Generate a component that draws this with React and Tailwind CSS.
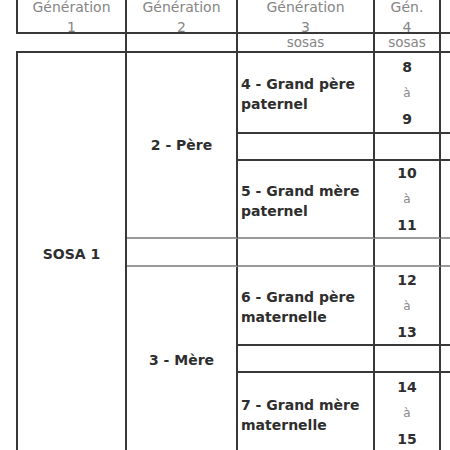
import React from 'react';

const V = 'border-[#383838]';

const Number = ({ from, to }) => (
  <div className="flex flex-col items-center justify-center h-full">
    <div className="leading-[26px] font-bold text-[14px] text-[#2e2e2e]">{from}</div>
    <div className="leading-[26px] text-[12px] text-[#8a8a8a]">à</div>
    <div className="leading-[26px] font-bold text-[14px] text-[#2e2e2e]">{to}</div>
  </div>
);

const Name = ({ children }) => (
  <div className="flex items-center h-full pl-[3px] pt-[3px] font-bold text-[14px] leading-[20px] text-[#2e2e2e]">
    {children}
  </div>
);

const Head = ({ top, bottom }) => (
  <>
    <div className="leading-[14px]">{top}</div>
    <div className="leading-[12px] mt-[7px]">{bottom}</div>
  </>
);

const App = () => {
  return (
    <div
      className="w-[450px] h-[450px] overflow-hidden bg-white"
      style={{ fontFamily: '"DejaVu Sans", Verdana, sans-serif' }}
    >
      <div className="grid grid-cols-[16px_111px_111px_137px_66px_9px] grid-rows-[34px_19px_81px_27px_78px_28px_79px_27px_80px]">
        {/* Header */}
        <div className="row-start-1 col-start-1"></div>
        <div className={`row-start-1 col-start-2 border-l-2 border-r-2 border-b-2 ${V} text-center text-[14px] text-[#858585]`}>
          <Head top="Génération" bottom="1" />
        </div>
        <div className={`row-start-1 col-start-3 border-r-2 border-b-2 ${V} text-center text-[14px] text-[#858585]`}>
          <Head top="Génération" bottom="2" />
        </div>
        <div className={`row-start-1 col-start-4 border-r-2 border-b-2 ${V} text-center text-[14px] text-[#858585]`}>
          <Head top="Génération" bottom="3" />
        </div>
        <div className={`row-start-1 col-start-5 border-r-2 border-b-2 ${V} text-center text-[14px] text-[#858585]`}>
          <Head top="Gén." bottom="4" />
        </div>
        <div className={`row-start-1 col-start-6 border-b-2 ${V}`}></div>

        {/* sosas row */}
        <div className={`row-start-2 col-start-2 border-r-2 border-b-2 ${V}`}></div>
        <div className={`row-start-2 col-start-3 border-r-2 border-b-2 ${V}`}></div>
        <div className={`row-start-2 col-start-4 border-r-2 border-b-2 ${V} text-center text-[13.5px] leading-[17px] text-[#858585]`}>sosas</div>
        <div className={`row-start-2 col-start-5 border-r-2 border-b-2 ${V} text-center text-[13.5px] leading-[17px] text-[#858585]`}>sosas</div>
        <div className={`row-start-2 col-start-6 border-b-2 ${V}`}></div>

        {/* Generation 1 */}
        <div className={`row-start-3 row-span-7 col-start-2 border-l-2 border-r-2 ${V} flex items-center justify-center pt-[2px] font-bold text-[14px] text-[#2e2e2e]`}>
          SOSA 1
        </div>

        {/* Generation 2 */}
        <div className={`row-start-3 row-span-3 col-start-3 border-r-2 ${V} border-b-2 border-b-[#9a9a9a] flex items-center justify-center font-bold text-[14px] text-[#2e2e2e]`}>
          2 - Père
        </div>
        <div className={`row-start-6 col-start-3 border-r-2 ${V} border-b-2 border-b-[#9a9a9a]`}></div>
        <div className={`row-start-7 row-span-3 col-start-3 border-r-2 ${V} flex items-center justify-center font-bold text-[14px] text-[#2e2e2e]`}>
          3 - Mère
        </div>

        {/* Generation 3 */}
        <div className={`row-start-3 col-start-4 border-r-2 border-b-2 ${V}`}><Name>4 - Grand père<br />paternel</Name></div>
        <div className={`row-start-4 col-start-4 border-r-2 border-b-2 ${V}`}></div>
        <div className={`row-start-5 col-start-4 border-r-2 ${V} border-b-2 border-b-[#9a9a9a]`}><Name>5 - Grand mère<br />paternel</Name></div>
        <div className={`row-start-6 col-start-4 border-r-2 ${V} border-b-2 border-b-[#9a9a9a]`}></div>
        <div className={`row-start-7 col-start-4 border-r-2 border-b-2 ${V}`}><Name>6 - Grand père<br />maternelle</Name></div>
        <div className={`row-start-8 col-start-4 border-r-2 border-b-2 ${V}`}></div>
        <div className={`row-start-9 col-start-4 border-r-2 ${V}`}><Name>7 - Grand mère<br />maternelle</Name></div>

        {/* Generation 4 */}
        <div className={`row-start-3 col-start-5 border-r-2 border-b-2 ${V}`}><Number from="8" to="9" /></div>
        <div className={`row-start-4 col-start-5 border-r-2 border-b-2 ${V}`}></div>
        <div className={`row-start-5 col-start-5 border-r-2 ${V} border-b-2 border-b-[#9a9a9a]`}><Number from="10" to="11" /></div>
        <div className={`row-start-6 col-start-5 border-r-2 ${V} border-b-2 border-b-[#9a9a9a]`}></div>
        <div className={`row-start-7 col-start-5 border-r-2 border-b-2 ${V}`}><Number from="12" to="13" /></div>
        <div className={`row-start-8 col-start-5 border-r-2 border-b-2 ${V}`}></div>
        <div className={`row-start-9 col-start-5 border-r-2 ${V}`}><Number from="14" to="15" /></div>

        {/* Right edge continuation */}
        <div className={`row-start-3 col-start-6 border-b-2 ${V}`}></div>
        <div className={`row-start-4 col-start-6 border-b-2 ${V}`}></div>
        <div className="row-start-5 col-start-6 border-b-2 border-b-[#9a9a9a]"></div>
        <div className="row-start-6 col-start-6 border-b-2 border-b-[#9a9a9a]"></div>
        <div className={`row-start-7 col-start-6 border-b-2 ${V}`}></div>
        <div className={`row-start-8 col-start-6 border-b-2 ${V}`}></div>
      </div>
    </div>
  );
};

export default App;
